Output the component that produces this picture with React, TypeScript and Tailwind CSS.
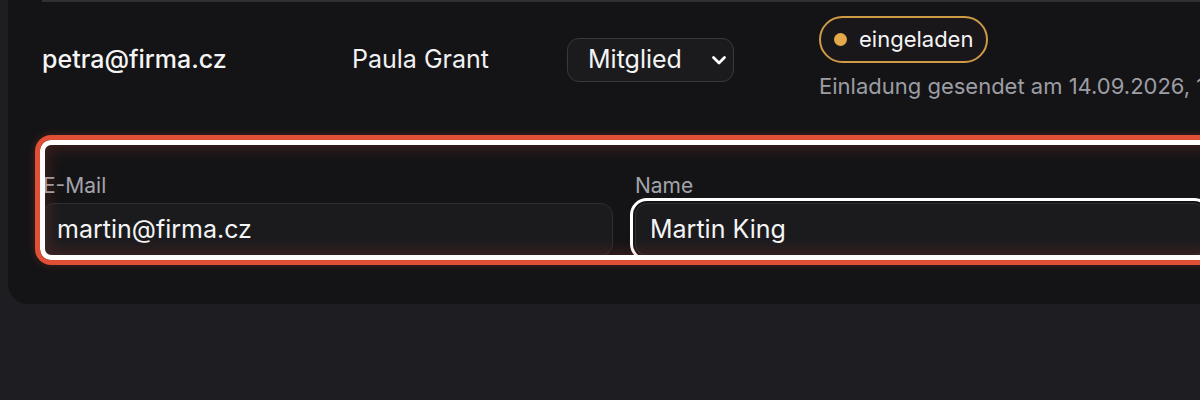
import React from "react";

const ChevronDown = () => (
  <svg width="16" height="16" viewBox="0 0 16 16" fill="none" className="text-white">
    <path d="M2.5 5.5 8 11 13.5 5.5" stroke="currentColor" strokeWidth="2.8" strokeLinecap="round" strokeLinejoin="round" />
  </svg>
);

const MemberRow = () => {
  return (
    <div className="grid h-[118px] grid-cols-[310px_215px_252px_1fr] items-center border-t-2 border-[#303034]">
      <div className="text-[25px] font-medium text-[#f4f4f5]">petra@firma.cz</div>
      <div className="text-[25px] text-[#f1f1f2]">Paula Grant</div>
      {/* Role select */}
      <div className="flex h-[44px] w-[167px] items-center justify-between rounded-[12px] border border-[#38383d] bg-[#1b1b1e] pl-[20px] pr-[6px]">
        <span className="text-[25px] text-[#f4f4f5]">Mitglied</span>
        <ChevronDown />
      </div>
      {/* Status */}
      <div className="-mt-[6px] flex flex-col items-start gap-[10px]">
        <span className="flex h-[47px] items-center gap-[12px] rounded-full border-2 border-[#cf9a45] bg-[#19171a] pl-[13px] pr-[13px]">
          <span className="h-[13px] w-[13px] rounded-full bg-[#e3a94b]" />
          <span className="text-[22px] text-[#f4f4f5]">eingeladen</span>
        </span>
        <span className="whitespace-nowrap text-[22px] leading-[26px] text-[#9d9da4]">
          Einladung gesendet am 14.09.2026, 1
        </span>
      </div>
    </div>
  );
};

const InviteForm = () => {
  return (
    <div className="relative mt-[25px] pt-[30px]">
      <div className="grid grid-cols-[571px_571px] gap-x-[22px]">
        <div className="flex flex-col">
          <label className="mb-[4px] ml-[1px] text-[21px] leading-[26px] text-[#a3a3aa]">E-Mail</label>
          <div className="flex h-[53px] items-center rounded-[12px] border border-[#2e2e33] bg-[#1b1b1e] px-[14px] text-[25px] text-[#f4f4f5]">
            martin@firma.cz
          </div>
        </div>
        <div className="flex flex-col">
          <label className="mb-[4px] text-[21px] leading-[26px] text-[#a3a3aa]">Name</label>
          <div className="flex h-[53px] items-center rounded-[12px] border border-[#2e2e33] bg-[#1b1b1e] px-[14px] text-[25px] text-[#f4f4f5] ring-[3px] ring-white ring-offset-2 ring-offset-[#141416]">
            Martin King
          </div>
        </div>
      </div>

      {/* Highlight overlay */}
      <div className="pointer-events-none absolute -top-[8px] -bottom-[9px] -left-[7px] -right-[60px] rounded-[16px] border-[5px] border-[#e04f36] shadow-[inset_0_0_0_5px_#ffffff,inset_0_0_16px_8px_rgba(224,79,54,0.22),0_0_8px_rgba(224,79,54,0.25)]" />
    </div>
  );
};

export default function App() {
  return (
    <div className="h-[400px] w-[1200px] overflow-hidden bg-[#1e1e22] pl-[8px] font-['Inter',sans-serif]">
      <div className="w-[1280px] rounded-b-[20px] bg-[#141416] pb-[48px] pl-[34px]">
        <MemberRow />
        <InviteForm />
      </div>
    </div>
  );
}
